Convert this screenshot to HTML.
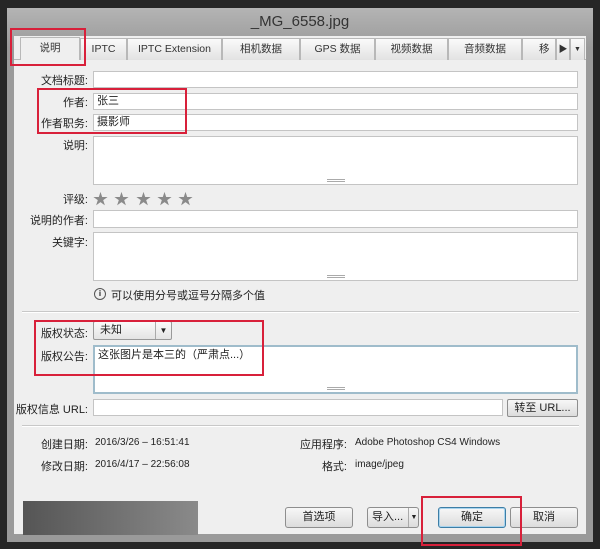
<!DOCTYPE html>
<html><head><meta charset="utf-8"><style>
*{margin:0;padding:0;box-sizing:border-box}
body{width:600px;height:549px;background:#262626;position:relative;overflow:hidden;font-family:"Liberation Sans","Noto Sans CJK SC",sans-serif;font-size:11px;color:#222}
.a{position:absolute}
.win{left:7px;top:8px;width:586px;height:534px;background:linear-gradient(#b4b4b4,#9a9a9a 40px,#9a9a9a);}
.panel{left:14px;top:36px;width:572px;height:498px;background:#efefef;}
.tab{position:absolute;top:38px;height:22px;border:1px solid #b8b8b8;border-bottom:none;background:linear-gradient(#fafafa,#e2e2e2);text-align:center;line-height:21px;font-size:10.5px;color:#333}
.lbl{position:absolute;right:512px;text-align:right;white-space:nowrap;font-size:11px}
.in{position:absolute;left:93px;background:#fff;border:1px solid #c4c4c4;padding-left:3px;font-size:11px;line-height:15px}
.grip{position:absolute;left:50%;bottom:2px;width:18px;height:3px;margin-left:-9px;border-top:1px solid #aaa;border-bottom:1px solid #aaa}
.red{position:absolute;border:2px solid #d8203a}
.btn{position:absolute;top:507px;height:21px;border:1px solid #8e8e8e;border-radius:3px;background:linear-gradient(#f7f7f7,#dcdcdc);text-align:center;line-height:19px;font-size:11px}
.star{position:absolute;top:188px;color:#8a8a8a;font-size:15px}
</style></head><body>
<div class="a win"></div>
<div class="a" style="left:0;top:13px;width:600px;text-align:center;font-size:15px;color:#333">_MG_6558.jpg</div>
<div class="a panel"></div>
<div class="a" style="left:14px;top:59px;width:572px;height:1px;background:#b8b8b8"></div>
<div class="tab" style="left:20px;width:60px;top:37px;height:23px;background:#efefef">说明</div>
<div class="tab" style="left:80px;width:47px">IPTC</div>
<div class="tab" style="left:127px;width:95px">IPTC Extension</div>
<div class="tab" style="left:222px;width:78px">相机数据</div>
<div class="tab" style="left:300px;width:75px">GPS 数据</div>
<div class="tab" style="left:375px;width:73px">视频数据</div>
<div class="tab" style="left:448px;width:74px">音频数据</div>
<div class="tab" style="left:522px;width:34px;text-align:left;padding-left:16px;overflow:hidden">移动</div>
<div class="tab" style="left:556px;width:14px;font-size:9px">▶</div>
<div class="tab" style="left:570px;width:15px;font-size:7px">▼</div>

<div class="lbl" style="top:72px">文档标题:</div><div class="in" style="top:71px;width:485px;height:17px"></div>
<div class="lbl" style="top:94px">作者:</div><div class="in" style="top:93px;width:485px;height:17px">张三</div>
<div class="lbl" style="top:115px">作者职务:</div><div class="in" style="top:114px;width:485px;height:17px">摄影师</div>
<div class="lbl" style="top:137px">说明:</div><div class="in" style="top:136px;width:485px;height:49px"><div class="grip"></div></div>
<div class="lbl" style="top:191px">评级:</div>
<div class="star" style="left:93px">★</div><div class="star" style="left:114px">★</div><div class="star" style="left:136px">★</div><div class="star" style="left:157px">★</div><div class="star" style="left:178px">★</div>
<div class="lbl" style="top:212px">说明的作者:</div><div class="in" style="top:210px;width:485px;height:18px"></div>
<div class="lbl" style="top:234px">关键字:</div><div class="in" style="top:232px;width:485px;height:49px"><div class="grip"></div></div>
<div class="a" style="left:94px;top:288px;width:12px;height:12px;border:1px solid #555;border-radius:50%;font-size:8px;text-align:center;line-height:10px;font-weight:bold">i</div>
<div class="a" style="left:111px;top:287px">可以使用分号或逗号分隔多个值</div>
<div class="a" style="left:22px;top:311px;width:557px;height:2px;background:#c8c8c8;border-bottom:1px solid #fff"></div>

<div class="lbl" style="top:325px">版权状态:</div>
<div class="a" style="left:93px;top:321px;width:79px;height:19px;border:1px solid #999;border-radius:2px;background:linear-gradient(#fafafa,#e4e4e4);padding-left:6px;line-height:17px">未知<span style="position:absolute;left:61px;top:0;height:17px;border-left:1px solid #aaa;width:16px;text-align:center;font-size:8px">▼</span></div>
<div class="lbl" style="top:348px">版权公告:</div><div class="in" style="top:345px;width:485px;height:49px;border:2px solid #9fbccb;line-height:16px">这张图片是本三的（严肃点...）<div class="grip"></div></div>
<div class="lbl" style="top:401px">版权信息 URL:</div><div class="in" style="top:399px;width:410px;height:17px"></div>
<div class="btn" style="left:507px;top:399px;width:71px;height:18px;line-height:16px;border-radius:2px">转至 URL...</div>
<div class="a" style="left:22px;top:425px;width:557px;height:2px;background:#c8c8c8;border-bottom:1px solid #fff"></div>

<div class="lbl" style="top:436px">创建日期:</div><div class="a" style="left:95px;top:437px;font-size:10px">2016/3/26 – 16:51:41</div>
<div class="lbl" style="top:458px">修改日期:</div><div class="a" style="left:95px;top:459px;font-size:10px">2016/4/17 – 22:56:08</div>
<div class="a" style="right:253px;top:436px">应用程序:</div><div class="a" style="left:355px;top:437px;font-size:10px">Adobe Photoshop CS4 Windows</div>
<div class="a" style="right:253px;top:458px">格式:</div><div class="a" style="left:355px;top:459px;font-size:10px">image/jpeg</div>

<div class="a" style="left:23px;top:501px;width:175px;height:34px;background:linear-gradient(90deg,#555,#8a8a8a)"></div>
<div class="btn" style="left:285px;width:68px">首选项</div>
<div class="btn" style="left:367px;width:52px;text-align:left;padding-left:4px">导入...<span style="position:absolute;left:40px;top:0;height:19px;border-left:1px solid #aaa;width:11px;text-align:center;font-size:7px">▼</span></div>
<div class="btn" style="left:438px;width:68px;border:1px solid #3d7ea6;box-shadow:inset 0 0 0 1px #a8d4ee">确定</div>
<div class="btn" style="left:510px;width:68px">取消</div>

<div class="red" style="left:10px;top:28px;width:76px;height:38px"></div>
<div class="red" style="left:37px;top:88px;width:150px;height:46px"></div>
<div class="red" style="left:34px;top:320px;width:230px;height:56px"></div>
<div class="red" style="left:421px;top:496px;width:101px;height:50px"></div>
</body></html>
